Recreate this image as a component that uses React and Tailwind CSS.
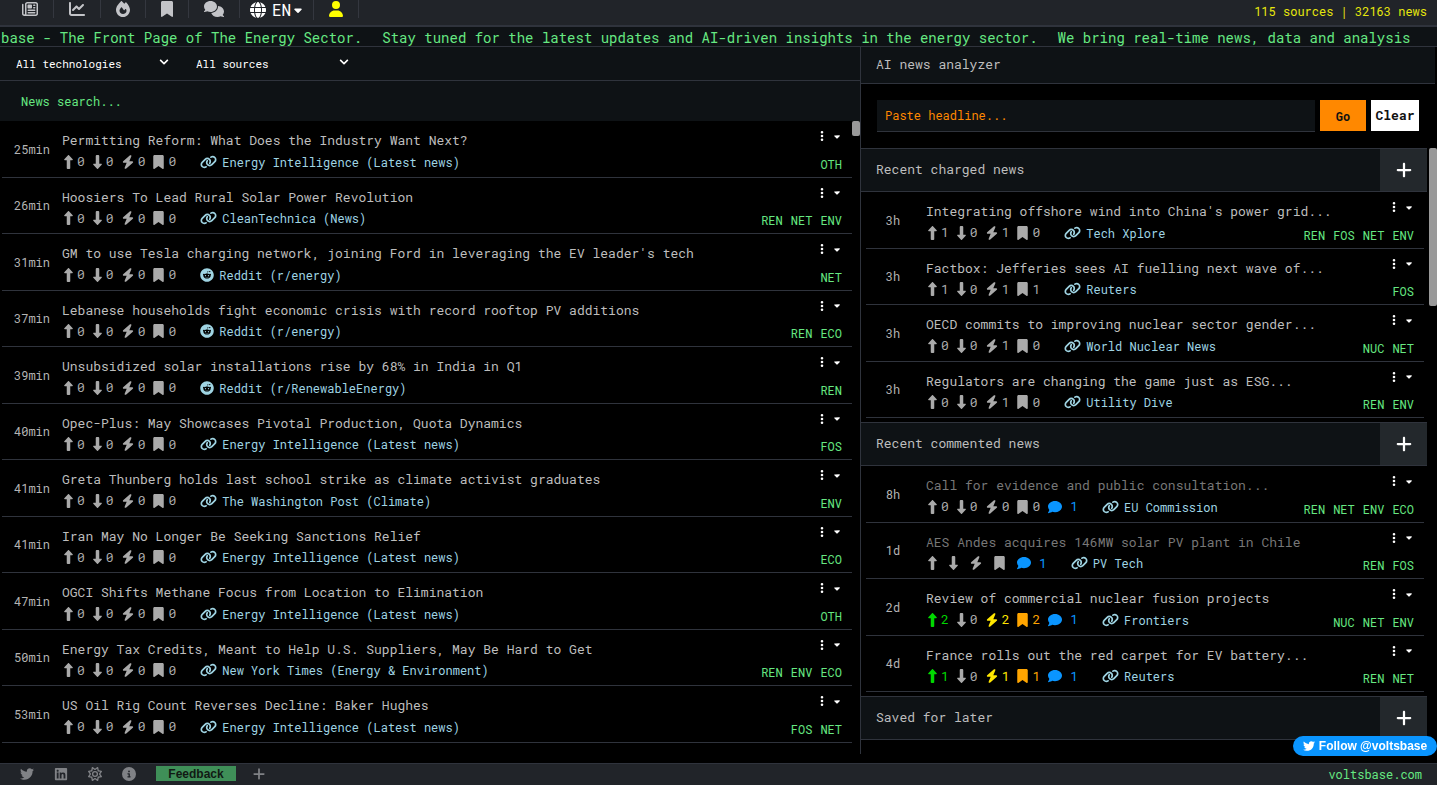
import React from "react";
import { FaChevronDown, FaReddit } from "react-icons/fa";
import {
  FaBolt,
  FaBookmark,
  FaCaretDown,
  FaChartLine,
  FaCircleInfo,
  FaComment,
  FaComments,
  FaDownLong,
  FaEllipsisVertical,
  FaFire,
  FaGlobe,
  FaLink,
  FaLinkedin,
  FaPlus,
  FaRegNewspaper,
  FaRegSun,
  FaTwitter,
  FaUpLong,
  FaUser
} from "react-icons/fa6";

const latestNews = [
  { time: "25min", title: "Permitting Reform: What Does the Industry Want Next?", source: "Energy Intelligence (Latest news)", tags: ["OTH"] },
  { time: "26min", title: "Hoosiers To Lead Rural Solar Power Revolution", source: "CleanTechnica (News)", tags: ["REN", "NET", "ENV"] },
  { time: "31min", title: "GM to use Tesla charging network, joining Ford in leveraging the EV leader's tech", source: "Reddit (r/energy)", reddit: true, tags: ["NET"] },
  { time: "37min", title: "Lebanese households fight economic crisis with record rooftop PV additions", source: "Reddit (r/energy)", reddit: true, tags: ["REN", "ECO"] },
  { time: "39min", title: "Unsubsidized solar installations rise by 68% in India in Q1", source: "Reddit (r/RenewableEnergy)", reddit: true, tags: ["REN"] },
  { time: "40min", title: "Opec-Plus: May Showcases Pivotal Production, Quota Dynamics", source: "Energy Intelligence (Latest news)", tags: ["FOS"] },
  { time: "41min", title: "Greta Thunberg holds last school strike as climate activist graduates", source: "The Washington Post (Climate)", tags: ["ENV"] },
  { time: "41min", title: "Iran May No Longer Be Seeking Sanctions Relief", source: "Energy Intelligence (Latest news)", tags: ["ECO"] },
  { time: "47min", title: "OGCI Shifts Methane Focus from Location to Elimination", source: "Energy Intelligence (Latest news)", tags: ["OTH"] },
  { time: "50min", title: "Energy Tax Credits, Meant to Help U.S. Suppliers, May Be Hard to Get", source: "New York Times (Energy & Environment)", tags: ["REN", "ENV", "ECO"] },
  { time: "53min", title: "US Oil Rig Count Reverses Decline: Baker Hughes", source: "Energy Intelligence (Latest news)", tags: ["FOS", "NET"] }
];

const sections = [
  {
    title: "Recent charged news",
    items: [
      { time: "3h", title: "Integrating offshore wind into China's power grid...", source: "Tech Xplore", stats: ["1", "0", "1", "0"], tags: ["REN", "FOS", "NET", "ENV"] },
      { time: "3h", title: "Factbox: Jefferies sees AI fuelling next wave of...", source: "Reuters", stats: ["1", "0", "1", "1"], tags: ["FOS"] },
      { time: "3h", title: "OECD commits to improving nuclear sector gender...", source: "World Nuclear News", stats: ["0", "0", "1", "0"], tags: ["NUC", "NET"] },
      { time: "3h", title: "Regulators are changing the game just as ESG...", source: "Utility Dive", stats: ["0", "0", "1", "0"], tags: ["REN", "ENV"] }
    ]
  },
  {
    title: "Recent commented news",
    items: [
      { time: "8h", title: "Call for evidence and public consultation...", source: "EU Commission", read: true, comments: 1, tags: ["REN", "NET", "ENV", "ECO"] },
      { time: "1d", title: "AES Andes acquires 146MW solar PV plant in Chile", source: "PV Tech", read: true, stats: ["", "", "", ""], comments: 1, tags: ["REN", "FOS"] },
      { time: "2d", title: "Review of commercial nuclear fusion projects", source: "Frontiers", stats: ["2", "0", "2", "2"], voted: true, comments: 1, tags: ["NUC", "NET", "ENV"] },
      { time: "4d", title: "France rolls out the red carpet for EV battery...", source: "Reuters", stats: ["1", "0", "1", "1"], voted: true, comments: 1, tags: ["REN", "NET"] }
    ]
  },
  { title: "Saved for later", items: [] }
];

const ticker = [
  "base - The Front Page of The Energy Sector.",
  "Stay tuned for the latest updates and AI-driven insights in the energy sector.",
  "We bring real-time news, data and analysis"
];

const statTypes = [
  { label: "Upvote", icon: FaUpLong, size: "w-[9px]", active: "text-[#00d800]" },
  { label: "Downvote", icon: FaDownLong, size: "w-[9px]", active: "text-[#aaaaaa]" },
  { label: "Charge", icon: FaBolt, size: "w-3", active: "text-[#ffe600]" },
  { label: "Save", icon: FaBookmark, size: "w-[11px]", active: "text-[#ffa500]" }
];

function NewsRow({ item, compact }) {
  const stats = item.stats || ["0", "0", "0", "0"];
  return (
    <li className="flex border-b border-[#2f333c]">
      <div
        className={`flex shrink-0 items-center justify-center text-xs text-[#b4b4b4] ${
          compact ? "w-[54px] mr-[6px]" : "w-[60px]"
        }`}
      >
        {item.time}
      </div>
      <div className="min-w-0 flex-1 pt-[10px] pb-[6px]">
        <a
          href="#"
          className={`block text-[13px] leading-normal whitespace-nowrap ${item.read ? "text-[#777777]" : "text-[#bdbdbd]"}`}
        >
          {item.title}
        </a>
        <div className="mt-[2px] ml-[2px] flex h-[18px] items-center gap-2">
          {statTypes.map(({ label, icon: Icon, size, active }, i) => (
            <button
              key={label}
              aria-label={label}
              className={`flex items-center gap-1 text-[13px] leading-none ${item.voted ? active : "text-[#aaaaaa]"}`}
            >
              <Icon className={`h-[14px] ${size}`} />
              <span>{stats[i]}</span>
            </button>
          ))}
          {item.comments && (
            <button aria-label="Comments" className="flex items-center gap-2 text-[13px] leading-none text-[#0a95ff]">
              <FaComment className="size-[14px]" />
              <span>{item.comments}</span>
            </button>
          )}
          <a href="#" className="ml-4 flex items-center gap-[5px] text-xs whitespace-nowrap text-[#9fd4e3]">
            {item.reddit ? <FaReddit className="size-[14px]" /> : <FaLink className="h-[14px] w-[17px]" />}
            {item.source}
          </a>
        </div>
      </div>
      <div className="flex shrink-0 flex-col items-end justify-between pt-[9px] pr-[10px] pb-1 text-xs">
        <button aria-label="More" className="flex items-center gap-1 text-white">
          <FaEllipsisVertical className="size-3" />
          <FaCaretDown className="h-[9px] w-[10px]" />
        </button>
        <div className="flex gap-2 leading-[18px] text-[#66e882]">
          {item.tags.map((tag) => (
            <span key={tag}>{tag}</span>
          ))}
        </div>
      </div>
    </li>
  );
}

function Section({ title, items }) {
  return (
    <section className="mb-1">
      <div className="flex h-11 items-stretch border-y border-[#2f333c] bg-[#0e1215]">
        <h2 className="flex-1 self-center pl-[15px] text-[13px] text-[#bdbdbd]">{title}</h2>
        <button aria-label={`Expand ${title}`} className="flex w-[47px] items-center justify-center bg-[#23282c] text-white">
          <FaPlus className="size-[18px]" />
        </button>
      </div>
      <ul className="mr-[3px] ml-[5px]">
        {items.map((item) => (
          <NewsRow key={item.title} item={item} compact />
        ))}
      </ul>
    </section>
  );
}

function Filter({ label }) {
  return (
    <div className="relative w-[180px]">
      <select aria-label={label} className="w-full appearance-none bg-transparent pl-4 text-[11px] text-white">
        <option>{label}</option>
      </select>
      <FaChevronDown className="pointer-events-none absolute top-1/2 right-[11px] size-[10px] -translate-y-1/2 text-white" />
    </div>
  );
}

function NavItem({ label, children }) {
  return (
    <a href="#" aria-label={label} className="flex h-[18px] items-center border-r border-[#34373f] px-[15px] text-[#c3c4c8]">
      {children}
    </a>
  );
}

export default function App() {
  return (
    <div className="flex h-screen flex-col overflow-hidden bg-black font-['Roboto_Mono','Liberation_Mono',monospace]">
      {/* Top bar */}
      <header className="flex h-[27px] shrink-0 items-start justify-between border-b-2 border-[#2f333c] bg-[#212429]">
        <nav className="flex items-start pl-[7px]">
          <NavItem label="News"><FaRegNewspaper className="size-4" /></NavItem>
          <NavItem label="Charts"><FaChartLine className="size-4" /></NavItem>
          <NavItem label="Hot"><FaFire className="h-4 w-[14px]" /></NavItem>
          <NavItem label="Saved"><FaBookmark className="h-4 w-3" /></NavItem>
          <NavItem label="Comments"><FaComments className="h-4 w-5" /></NavItem>
          <button className="flex h-5 items-center border-r border-[#34373f] px-[10px] text-base text-white">
            <FaGlobe className="size-4" />
            <span className="ml-[6px]">EN</span>
            <FaCaretDown className="ml-[2px] h-3 w-[10px]" />
          </button>
          <a href="#" aria-label="Account" className="flex h-[18px] items-center border-r border-[#34373f] px-[15px] text-[#ffff00]">
            <FaUser className="h-4 w-[14px]" />
          </a>
        </nav>
        <p className="pt-[3px] pr-[10px] text-xs text-[#e8e80c]">115 sources | 32163 news</p>
      </header>

      {/* Ticker */}
      <div className="flex h-5 shrink-0 items-center gap-5 overflow-hidden border-b border-[#2f333c] bg-[#0e1215] pt-[2px] pl-px text-sm whitespace-nowrap text-[#66e882]">
        {ticker.map((text) => (
          <span key={text}>{text}</span>
        ))}
      </div>

      <main className="grid min-h-0 flex-1 grid-cols-[3fr_2fr] grid-rows-1 pr-[2px] pb-[9px]">
        {/* Latest news */}
        <div className="flex min-h-0 min-w-0 flex-col border-r border-[#2f333c]">
          <div className="flex h-[34px] shrink-0 items-center border-b border-[#2f333c] bg-[#0e1215] pb-1">
            <Filter label="All technologies" />
            <Filter label="All sources" />
          </div>
          <input
            aria-label="News search"
            placeholder="News search..."
            className="h-10 w-full shrink-0 bg-[#0e1215] px-[21px] text-xs text-[#66e882] outline-none placeholder:text-[#66e882]"
          />
          <div className="flex min-h-0 flex-1 overflow-hidden">
            <ul className="ml-[2px] min-w-0 flex-1">
              {latestNews.map((item) => (
                <NewsRow key={item.title} item={item} />
              ))}
            </ul>
            <div className="w-2">
              <div className="h-[15px] rounded-xs bg-[#999999]" />
            </div>
          </div>
        </div>

        {/* Sidebar */}
        <div className="flex min-h-0 min-w-0 flex-col">
          <h2 className="flex h-[37px] shrink-0 items-center border-b border-[#2f333c] bg-[#0e1215] pl-[15px] text-[13px] text-[#bdbdbd]">
            AI news analyzer
          </h2>
          <form className="flex h-16 shrink-0 items-start gap-[5px] px-4 pt-4" onSubmit={(e) => e.preventDefault()}>
            <input
              aria-label="Paste headline"
              placeholder="Paste headline..."
              className="h-8 min-w-0 flex-1 border-b border-[#2f333c] bg-[#0e1215] px-2 pb-[2px] text-xs text-[#ff8800] outline-none placeholder:text-[#ff8800]"
            />
            <button className="h-[31px] w-[46px] bg-[#ff8800] text-xs font-bold text-[#111111]">Go</button>
            <button type="reset" className="h-[31px] w-12 bg-white text-[13px] font-bold text-[#111111]">Clear</button>
          </form>
          <div className="-mr-[2px] flex min-h-0 flex-1 overflow-hidden">
            <div className="min-w-0 flex-1">
              {sections.map((section) => (
                <Section key={section.title} {...section} />
              ))}
            </div>
            <div className="ml-[2px] w-2">
              <div className="h-[158px] rounded-xs bg-[#999999]" />
            </div>
          </div>
        </div>
      </main>

      <footer className="flex h-[22px] shrink-0 items-center justify-between border-t border-[#2f333c] bg-[#212429] pr-[15px] pb-[2px] pl-5 text-[#808286]">
        <div className="flex items-center gap-5">
          <a href="#" aria-label="Twitter"><FaTwitter className="size-[14px]" /></a>
          <a href="#" aria-label="LinkedIn"><FaLinkedin className="size-[14px]" /></a>
          <button aria-label="Theme"><FaRegSun className="size-[14px]" /></button>
          <a href="#" aria-label="About"><FaCircleInfo className="size-[14px]" /></a>
          <div className="flex items-center gap-4">
            <button className="h-[15px] w-20 bg-[#3f8f58] font-['Liberation_Sans',sans-serif] text-xs leading-none font-bold text-[#111a14]">
              Feedback
            </button>
            <button aria-label="Add"><FaPlus className="size-[14px]" /></button>
          </div>
        </div>
        <a href="#" className="text-xs text-[#66e882]">voltsbase.com</a>
      </footer>

      <a
        href="#"
        className="fixed right-0 bottom-[29px] flex h-5 w-36 items-center justify-center gap-1 rounded-full bg-[#0a95ff] font-['Liberation_Sans',sans-serif] text-xs font-bold whitespace-nowrap text-white"
      >
        <FaTwitter className="size-3" />
        Follow @voltsbase
      </a>
    </div>
  );
}
